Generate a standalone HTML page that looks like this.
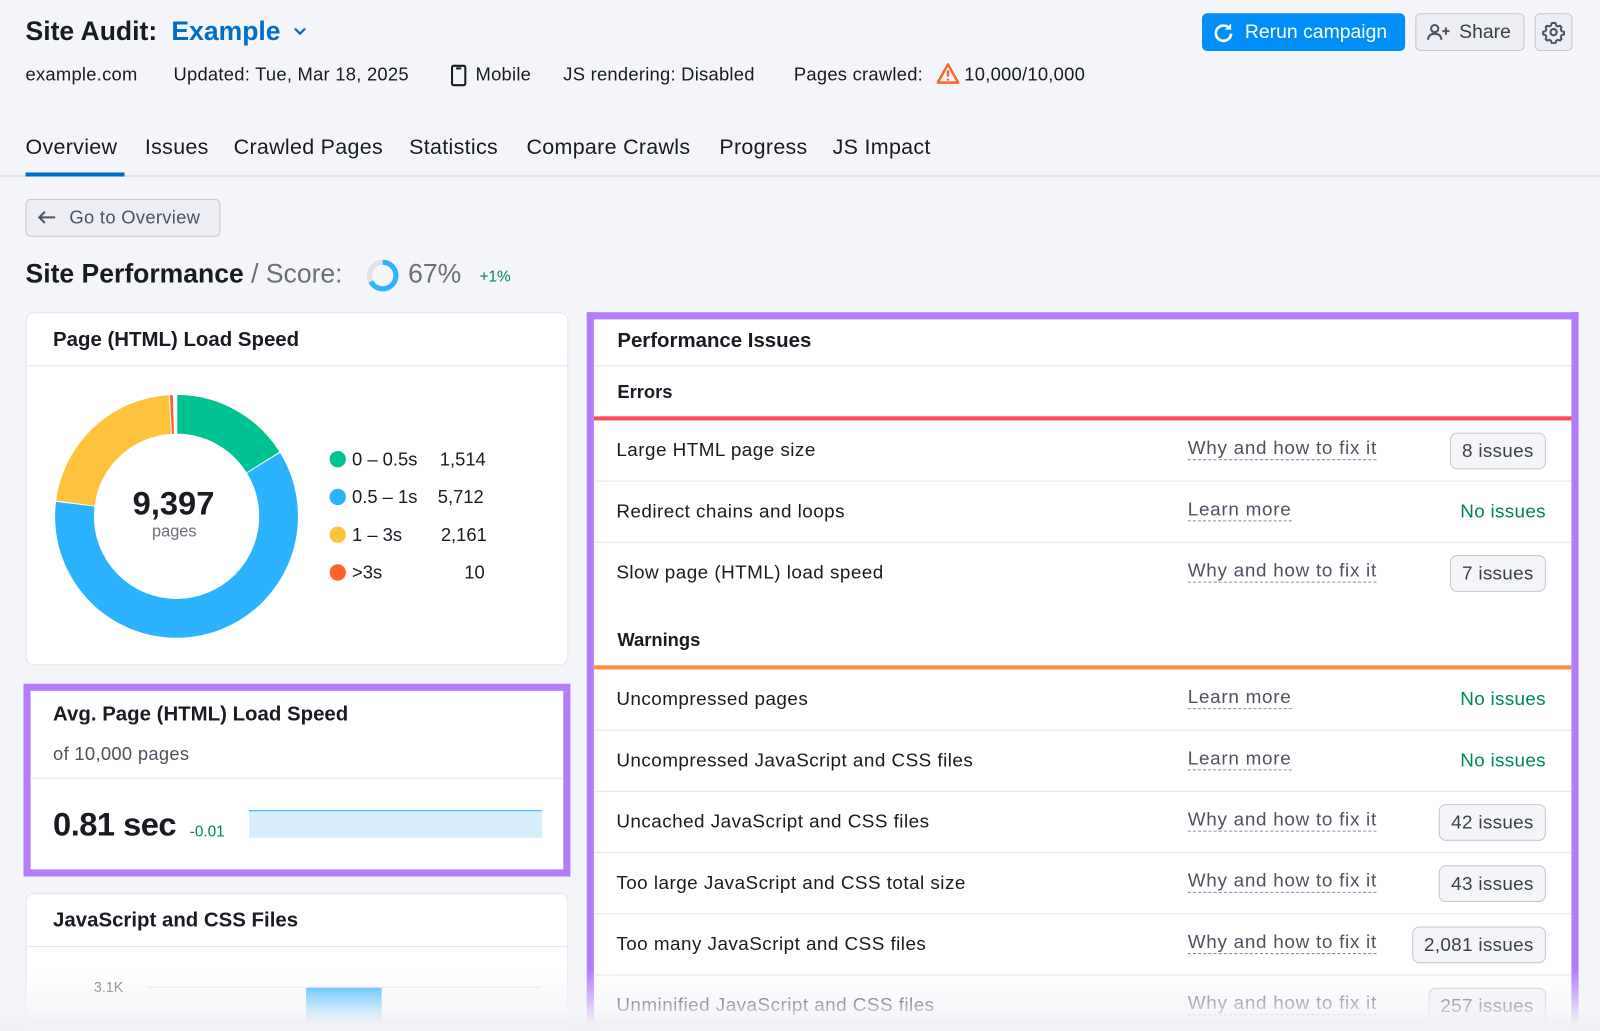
<!DOCTYPE html>
<html><head><meta charset="utf-8"><style>
*{box-sizing:border-box;margin:0;padding:0}
html,body{width:1600px;height:1031px;overflow:hidden;background:#f4f5f9}
#w{position:absolute;left:0;top:0;width:1568px;height:1010px;overflow:hidden;transform:scale(1.020408);transform-origin:0 0;font-family:"Liberation Sans",sans-serif;color:#191b23}
.a{position:absolute;white-space:nowrap}
.t{font-size:18px;letter-spacing:0.25px}
.card{position:absolute;background:#fff;border:1px solid #e4e5ea;border-radius:8px}
.hd{font-weight:bold;font-size:20px}
.row{position:absolute;left:0;right:0;height:60px;border-bottom:1px solid #e4e5ea}
.row .n{position:absolute;left:22px;top:18px;font-size:18.5px;letter-spacing:0.45px;color:#191b23}
.row .l{position:absolute;left:582px;top:16px;font-size:18.5px;letter-spacing:0.7px;color:#4d5160;border-bottom:1px dashed #8a8e9c;line-height:22px}
.row .b{position:absolute;right:25px;top:12px;height:36px;padding:0 11px;border:1px solid #c4c7d0;border-radius:7px;background:#f4f5f9;font-size:18.5px;letter-spacing:0.3px;line-height:34px;color:#3b3e4a}
.row .g{position:absolute;right:25px;top:18px;font-size:18.5px;letter-spacing:0.3px;color:#008557}
.lg{position:absolute;font-size:18px}
.dot{display:inline-block;width:16px;height:16px;border-radius:50%;vertical-align:-2px;margin-right:6px}
.tab{position:absolute;top:133px;font-size:21px;letter-spacing:0.3px}
</style></head><body><div id="w">
<div class="a" style="left:25px;top:15px;font-size:26px;font-weight:bold">Site Audit:</div>
<div class="a" style="left:168px;top:15px;font-size:26px;font-weight:bold;color:#006dca">Example</div>
<svg class="a" style="left:286px;top:25px" width="16" height="12"><path d="M3 3l5 5 5-5" stroke="#006dca" stroke-width="2.2" fill="none"/></svg>
<div class="a t" style="left:25px;top:63px">example.com</div>
<div class="a t" style="left:170px;top:63px">Updated: Tue, Mar 18, 2025</div>
<svg class="a" style="left:441px;top:63px" width="18" height="22"><rect x="2" y="1.5" width="13" height="19" rx="1.5" stroke="#191b23" stroke-width="2" fill="none"/><rect x="6" y="3" width="5" height="2" fill="#191b23"/></svg>
<div class="a t" style="left:466px;top:63px">Mobile</div>
<div class="a t" style="left:552px;top:63px">JS rendering: Disabled</div>
<div class="a t" style="left:778px;top:63px">Pages crawled:</div>
<svg class="a" style="left:917px;top:61px" width="24" height="22"><path d="M12 2L22 20H2Z" stroke="#ff642d" stroke-width="2.4" fill="none" stroke-linejoin="round"/><path d="M12 8v6M12 16v2" stroke="#ff642d" stroke-width="2.4"/></svg>
<div class="a t" style="left:945px;top:63px">10,000/10,000</div>
<div class="a" style="left:1178px;top:13px;width:199px;height:37px;background:#008ff8;border-radius:5px;color:#fff;font-size:19px;line-height:37px;padding-left:42px">Rerun campaign</div>
<svg class="a" style="left:1188px;top:21px" width="22" height="22"><path d="M17 7A7.5 7.5 0 1 0 18.5 12" stroke="#fff" stroke-width="2.6" fill="none"/><path d="M18.5 2v6h-6" fill="#fff"/></svg>
<div class="a" style="left:1387px;top:13px;width:107px;height:37px;background:#eceef3;border:1px solid #c4c7d0;border-radius:5px;color:#3b3e4a;font-size:19px;line-height:35px;padding-left:42px">Share</div>
<svg class="a" style="left:1398px;top:23px" width="24" height="18"><circle cx="8" cy="5" r="3.5" stroke="#4d5160" stroke-width="2" fill="none"/><path d="M1.5 16c0-4 3-6 6.5-6s6.5 2 6.5 6" stroke="#4d5160" stroke-width="2" fill="none"/><path d="M19 4v7M15.5 7.5h7" stroke="#4d5160" stroke-width="2"/></svg>
<div class="a" style="left:1504px;top:13px;width:37px;height:37px;background:#eceef3;border:1px solid #c4c7d0;border-radius:5px"></div>
<svg class="a" style="left:1511px;top:20px" width="23" height="23" viewBox="0 0 24 24"><circle cx="12" cy="12" r="3.2" stroke="#4d5160" stroke-width="2.2" fill="none"/><path d="M12 2.5l2 .3.6 2.4 1.8 1 2.3-.8 1.4 1.5-.8 2.3 1 1.8 2.4.6v2.8l-2.4.6-1 1.8.8 2.3-1.4 1.5-2.3-.8-1.8 1-.6 2.4h-4l-.6-2.4-1.8-1-2.3.8-1.4-1.5.8-2.3-1-1.8-2.4-.6v-2.8l2.4-.6 1-1.8-.8-2.3 1.4-1.5 2.3.8 1.8-1 .6-2.4z" stroke="#4d5160" stroke-width="2" fill="none" stroke-linejoin="round"/></svg>
<div class="a" style="left:0;top:172px;width:1568px;height:1px;background:#d3d5dc"></div>
<div class="tab" style="left:25px">Overview</div>
<div class="a" style="left:25px;top:169px;width:97px;height:4px;background:#006dca"></div>
<div class="tab" style="left:142px">Issues</div>
<div class="tab" style="left:229px">Crawled Pages</div>
<div class="tab" style="left:401px">Statistics</div>
<div class="tab" style="left:516px">Compare Crawls</div>
<div class="tab" style="left:705px">Progress</div>
<div class="tab" style="left:816px">JS Impact</div>
<div class="a" style="left:25px;top:195px;width:191px;height:37px;border:1px solid #c4c7d0;border-radius:5px;background:#eceef3;color:#4d5160;font-size:18px;letter-spacing:0.3px;line-height:35px;padding-left:42px">Go to Overview</div>
<svg class="a" style="left:36px;top:205px" width="20" height="16"><path d="M18 8H3M8 2.5L2.5 8 8 13.5" stroke="#4d5160" stroke-width="2" fill="none"/></svg>
<div class="a" style="left:25px;top:253px;font-size:26px"><b>Site Performance</b><span style="color:#6c6e79"> / Score:</span></div>
<svg class="a" style="left:358px;top:253px" width="34" height="34"><circle cx="17" cy="17" r="13" stroke="#e0e1e9" stroke-width="5" fill="none"/><circle cx="17" cy="17" r="13" stroke="#2bb3ff" stroke-width="5" fill="none" stroke-dasharray="54.7 100" transform="rotate(-90 17 17)"/></svg>
<div class="a" style="left:400px;top:253px;font-size:26px;color:#6c6e79">67%</div>
<div class="a" style="left:470px;top:263px;font-size:15px;color:#008557">+1%</div>

<div class="card" style="left:25px;top:306px;width:532px;height:346px">
<div class="a hd" style="left:26px;top:15px">Page (HTML) Load Speed</div>
<div class="a" style="left:0;top:51px;width:530px;height:1px;background:#e4e5ea"></div>
<svg class="a" style="left:26px;top:78px" width="242" height="242"><g transform="rotate(-90 121 121)" fill="none" stroke-width="38">
<circle cx="121" cy="121" r="100" stroke="#00c292" stroke-dasharray="101 700"/>
<circle cx="121" cy="121" r="100" stroke="#2bb3ff" stroke-dasharray="0 102 381 700"/>
<circle cx="121" cy="121" r="100" stroke="#ffc23d" stroke-dasharray="0 484 137.5 700"/>
<circle cx="121" cy="121" r="100" stroke="#ff642d" stroke-dasharray="0 622.5 2.5 700"/></g>
<g stroke="#fff" stroke-width="1.5"><line x1="121" y1="0" x2="121" y2="42"/></g></svg>
<div class="a" style="left:104px;top:168px;font-size:32px;font-weight:bold">9,397</div>
<div class="a" style="left:123px;top:206px;font-size:16px;color:#6c6e79">pages</div>
<div class="lg" style="left:297px;top:133px"><span class="dot" style="background:#00c292"></span>0 – 0.5s</div><div class="lg" style="left:405px;top:133px">1,514</div>
<div class="lg" style="left:297px;top:170px"><span class="dot" style="background:#2bb3ff"></span>0.5 – 1s</div><div class="lg" style="left:403px;top:170px">5,712</div>
<div class="lg" style="left:297px;top:207px"><span class="dot" style="background:#ffc23d"></span>1 – 3s</div><div class="lg" style="left:406px;top:207px">2,161</div>
<div class="lg" style="left:297px;top:244px"><span class="dot" style="background:#ff642d"></span>&gt;3s</div><div class="lg" style="left:429px;top:244px">10</div>
</div>

<div class="a" style="left:23px;top:670px;width:536px;height:189px;border:7px solid #b57cf9;background:#fff">
<div class="a hd" style="left:22px;top:12px">Avg. Page (HTML) Load Speed</div>
<div class="a" style="left:22px;top:52px;font-size:18px;letter-spacing:0.3px;color:#4d5160">of 10,000 pages</div>
<div class="a" style="left:0;top:85px;width:522px;height:1px;background:#e4e5ea"></div>
<div class="a" style="left:22px;top:113px;font-size:32px;font-weight:bold;letter-spacing:-0.5px">0.81 sec</div>
<div class="a" style="left:156px;top:130px;font-size:15px;color:#008557">-0.01</div>
<div class="a" style="left:214px;top:117px;width:287px;height:27px;background:#d5eefa;border-top:1px solid #2bb3ff"></div>
</div>

<div class="card" style="left:25px;top:875px;width:532px;height:135px;border-bottom:none;border-radius:8px 8px 0 0">
<div class="a hd" style="left:26px;top:15px">JavaScript and CSS Files</div>
<div class="a" style="left:0;top:51px;width:530px;height:1px;background:#e4e5ea"></div>
<div class="a" style="left:66px;top:83px;font-size:14px;color:#6c6e79">3.1K</div>
<div class="a" style="left:118px;top:91px;width:386px;height:1px;background:#e4e5ea"></div>
<div class="a" style="left:274px;top:92px;width:74px;height:40px;background:linear-gradient(#2bb3ff,#9ad8ff)"></div>
</div>

<div class="a" style="left:575px;top:306px;width:972px;height:704px;border:7px solid #b57cf9;border-bottom:none;background:#fff;overflow:hidden">
<div class="a hd" style="left:23px;top:10px">Performance Issues</div>
<div class="a" style="left:0;top:45px;width:958px;height:1px;background:#e4e5ea"></div>
<div class="a" style="left:23px;top:61px;font-size:18px;font-weight:bold">Errors</div>
<div class="a" style="left:0;top:95px;width:958px;height:4px;background:#ff4953"></div>
<div class="row" style="top:99px"><span class="n">Large HTML page size</span><span class="l">Why and how to fix it</span><span class="b">8 issues</span></div>
<div class="row" style="top:159px"><span class="n">Redirect chains and loops</span><span class="l">Learn more</span><span class="g">No issues</span></div>
<div class="row" style="top:219px;border:none"><span class="n">Slow page (HTML) load speed</span><span class="l">Why and how to fix it</span><span class="b">7 issues</span></div>
<div class="a" style="left:23px;top:304px;font-size:18px;font-weight:bold">Warnings</div>
<div class="a" style="left:0;top:339px;width:958px;height:4px;background:#ff8c43"></div>
<div class="row" style="top:343px"><span class="n">Uncompressed pages</span><span class="l">Learn more</span><span class="g">No issues</span></div>
<div class="row" style="top:403px"><span class="n">Uncompressed JavaScript and CSS files</span><span class="l">Learn more</span><span class="g">No issues</span></div>
<div class="row" style="top:463px"><span class="n">Uncached JavaScript and CSS files</span><span class="l">Why and how to fix it</span><span class="b">42 issues</span></div>
<div class="row" style="top:523px"><span class="n">Too large JavaScript and CSS total size</span><span class="l">Why and how to fix it</span><span class="b">43 issues</span></div>
<div class="row" style="top:583px"><span class="n">Too many JavaScript and CSS files</span><span class="l">Why and how to fix it</span><span class="b">2,081 issues</span></div>
<div class="row" style="top:643px;border:none"><span class="n">Unminified JavaScript and CSS files</span><span class="l">Why and how to fix it</span><span class="b">257 issues</span></div>
</div>
<div class="a" style="left:0;top:950px;width:1568px;height:60px;background:linear-gradient(rgba(244,245,249,0),rgba(244,245,249,0.7) 65%,#f0f1f4 90%)"></div>
</div></body></html>
